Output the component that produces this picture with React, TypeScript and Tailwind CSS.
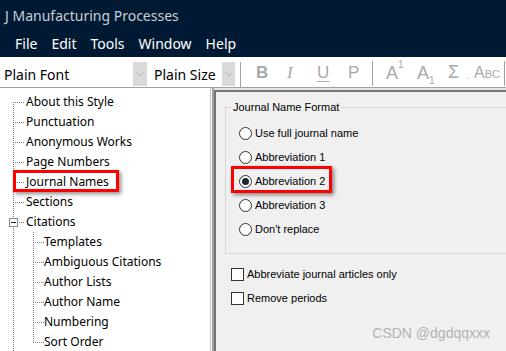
type TreeNode = {
  label: string
  level: 0 | 1
  first?: boolean
  last?: boolean
  box?: boolean
  mark?: boolean
}

const nodes: TreeNode[] = [
  { label: 'About this Style', level: 0, first: true },
  { label: 'Punctuation', level: 0 },
  { label: 'Anonymous Works', level: 0 },
  { label: 'Page Numbers', level: 0 },
  { label: 'Journal Names', level: 0, mark: true },
  { label: 'Sections', level: 0 },
  { label: 'Citations', level: 0, box: true },
  { label: 'Templates', level: 1 },
  { label: 'Ambiguous Citations', level: 1 },
  { label: 'Author Lists', level: 1 },
  { label: 'Author Name', level: 1 },
  { label: 'Numbering', level: 1 },
  { label: 'Sort Order', level: 1, last: true },
]

const formats = ['Use full journal name', 'Abbreviation 1', 'Abbreviation 2', 'Abbreviation 3', "Don't replace"]

function Lines({ n }: { n: TreeNode }) {
  const w = n.level === 0 ? 25 : 44
  return (
    <svg width={w} height={20} className="shrink-0" shapeRendering="crispEdges">
      <g stroke="#7c7c7c" strokeDasharray="1 1">
        {n.box ? (
          <>
            <line x1={13.5} y1={0} x2={13.5} y2={6} />
            <line x1={13.5} y1={16} x2={13.5} y2={20} />
          </>
        ) : (
          <line x1={13.5} y1={n.first ? 10 : 0} x2={13.5} y2={20} />
        )}
        {n.level === 0 && <line x1={n.box ? 19 : 15} y1={10.5} x2={25} y2={10.5} />}
        {n.level === 1 && (
          <>
            <line x1={33.5} y1={0} x2={33.5} y2={n.last ? 11 : 20} />
            <line x1={35} y1={10.5} x2={44} y2={10.5} />
          </>
        )}
      </g>
      {n.box && (
        <>
          <rect x={9.5} y={6.5} width={8} height={8} fill="white" stroke="#8a8a8a" />
          <line x1={11} y1={10.5} x2={16} y2={10.5} stroke="#222" />
        </>
      )}
    </svg>
  )
}

function Chevron() {
  return (
    <svg width="14" height="24" viewBox="0 0 14 24">
      <path d="M3.5 10.5 L7 14 L10.5 10.5" fill="none" stroke="#b4b4b4" strokeWidth="1" />
    </svg>
  )
}

export default function App() {
  return (
    <div className="w-[506px] h-[351px] overflow-hidden flex flex-col bg-[#f0f0f0]">
      {/* title + menu */}
      <div className="h-[57px] shrink-0 bg-[#011a33] flex flex-col font-['Noto_Sans',sans-serif] text-[14px]">
        <div className="h-[30px] pl-[5px] flex items-center text-[#c9ced6]">J Manufacturing Processes</div>
        <div className="h-[27px] pl-[15px] flex items-center gap-[14px] text-white">
          <span>File</span>
          <span>Edit</span>
          <span>Tools</span>
          <span>Window</span>
          <span>Help</span>
        </div>
      </div>

      {/* toolbar */}
      <div className="h-[31px] shrink-0 bg-white border-b border-[#a0a0a0] flex items-end">
        <div className="flex h-[25px] items-center">
          <div className="w-[133px] pl-[4px] font-['Noto_Sans',sans-serif] text-[14px] text-black">Plain Font</div>
          <div className="w-[14px] h-[24px] bg-[#dadada] self-start">
            <Chevron />
          </div>
        </div>
        <div className="flex h-[25px] items-center ml-[4px]">
          <div className="w-[71px] pl-[3px] font-['Noto_Sans',sans-serif] text-[14px] text-black">Plain Size</div>
          <div className="w-[13px] h-[24px] bg-[#dadada] self-start">
            <Chevron />
          </div>
        </div>
        <div className="ml-[5px] w-px h-[25px] bg-[#a0a0a0]" />
        <div className="flex items-center h-[29px] self-start mt-[1px] font-['Liberation_Sans',sans-serif] text-[#a8a8a8]">
          <span className="ml-[15px] w-[31px] text-[17px] font-bold">B</span>
          <span className="w-[30px] text-[17px] italic font-['Liberation_Serif',serif]">I</span>
          <span className="w-[31px] text-[17px] underline underline-offset-[3px]">U</span>
          <span className="w-[24px] text-[17px]">P</span>
          <span className="w-px h-[25px] bg-[#a0a0a0] mt-[1px]" />
          <span className="ml-[13px] w-[31px] text-[18px] leading-none">
            A<sup className="text-[10px] align-[6px]">1</sup>
          </span>
          <span className="w-[31px] text-[18px] leading-none">
            A<sub className="text-[10px] align-[-3px]">1</sub>
          </span>
          <span className="w-[18px] text-[18px]">Σ</span>
          <span className="w-[8px] text-[10px] pt-[6px]">.</span>
          <span className="w-[30px] text-[16px]">
            A<span className="text-[11px]">BC</span>
          </span>
          <span className="w-px h-[25px] bg-[#a0a0a0] mt-[1px]" />
        </div>
      </div>

      {/* body */}
      <div className="flex-1 flex min-h-0">
        <div className="w-[211px] shrink-0 bg-white border-r border-[#c8c8c8] pt-[4px] font-['Noto_Sans',sans-serif] text-[12px] text-black overflow-hidden">
          {nodes.map((n) => (
            <div key={n.label} className="relative h-[20px] flex items-center">
              <Lines n={n} />
              <span className={n.level === 0 ? 'ml-[1px] leading-[20px]' : 'leading-[20px]'}>{n.label}</span>
              {n.mark && (
                <div className="absolute left-[13px] top-[-2px] w-[106px] h-[22px] border-[3px] border-[#ff0000] shadow-[2px_2px_4px_rgba(0,0,0,0.45)]" />
              )}
            </div>
          ))}
        </div>
        <div className="w-px bg-[#f7f7f7]" />
        <div className="w-[2px] bg-[#a0a0a0]" />
        <div className="flex-1 border-t-2 border-[#e3e3e3] min-w-0">
          <div className="h-full border-t-2 border-l-2 border-[#767676] bg-[#f0f0f0] overflow-hidden flex flex-col font-['Liberation_Sans',sans-serif] text-[11px] text-black">
            <fieldset className="ml-[9px] mt-[8px] w-[300px] shrink-0 border border-[#d5d5d5] pb-[12px]">
              <legend className="ml-[5px] px-[2px] leading-[14px]">Journal Name Format</legend>
              <div className="mt-[7px] pl-[13px] flex flex-col">
                {formats.map((f, i) => (
                  <div key={f} className="relative h-[24px] flex items-center gap-[3px]">
                    <span className="w-[13px] h-[13px] rounded-full border border-[#333] bg-white flex items-center justify-center">
                      {i === 2 && <span className="w-[7px] h-[7px] rounded-full bg-[#1e2633]" />}
                    </span>
                    <span>{f}</span>
                    {i === 2 && (
                      <div className="absolute left-[-8px] top-[-3px] w-[101px] h-[27px] border-[3px] border-[#ff0000] shadow-[2px_2px_4px_rgba(0,0,0,0.45)]" />
                    )}
                  </div>
                ))}
              </div>
            </fieldset>
            <div className="mt-[8px] ml-[15px] flex flex-col">
              {['Abbreviate journal articles only', 'Remove periods'].map((c) => (
                <div key={c} className="h-[24px] flex items-center gap-[3px]">
                  <span className="w-[13px] h-[13px] border border-[#333] bg-white" />
                  <span>{c}</span>
                </div>
              ))}
            </div>
            <div className="mt-auto self-end mr-[16px] mb-[10px] text-[14px] leading-[16px] text-[#b3b3b3]">CSDN @dgdqqxxx</div>
          </div>
        </div>
      </div>
    </div>
  )
}
